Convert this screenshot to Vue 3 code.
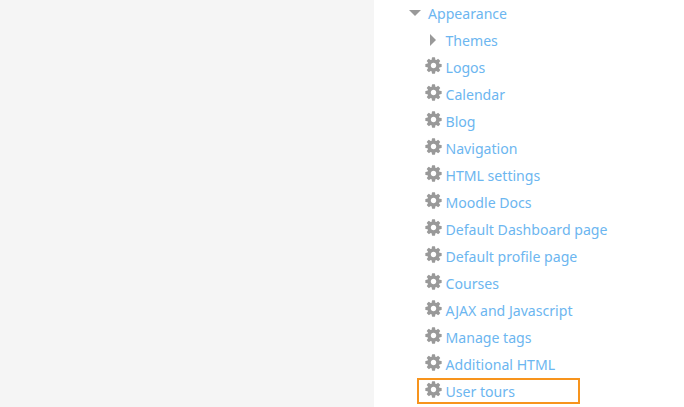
<script setup>
const items = ['Logos','Calendar','Blog','Navigation','HTML settings','Moodle Docs','Default Dashboard page','Default profile page','Courses','AJAX and Javascript','Manage tags','Additional HTML']
const gear = 'M1152 896q0-106-75-181t-181-75-181 75-75 181 75 181 181 75 181-75 75-181zm512-109v222q0 12-8 23t-20 13l-185 28q-19 54-39 91 35 50 107 138 10 12 10 25t-9 23q-27 37-99 108t-94 71q-12 0-26-9l-138-108q-44 23-91 38-16 136-29 186-7 28-36 28h-222q-14 0-24.500-8.500t-11.500-21.500l-28-184q-49-16-90-37l-141 107q-10 9-25 9-14 0-25-11-126-114-165-168-7-10-7-23 0-12 8-23 15-21 51-66.500t54-70.500q-27-50-41-99l-183-27q-13-2-21-12.500t-8-23.500v-222q0-12 8-23t19-13l186-28q14-46 39-92-40-57-107-138-10-12-10-24 0-10 9-23 26-36 98.500-107.500t94.500-71.500q13 0 26 10l138 107q44-23 91-38 16-136 29-186 7-28 36-28h222q14 0 24.500 8.500t11.500 21.500l28 184q49 16 90 37l142-107q9-9 24-9 13 0 25 10 129 119 165 170 7 8 7 22 0 12-8 23-15 21-51 66.500t-54 70.500q26 50 41 98l183 28q13 2 21 12.500t8 23.500z'
</script>

<template>
  <div class="page">
    <aside class="side"></aside>
    <main class="content">
      <ul class="tree">
        <li class="row top">
          <svg class="caret-down" width="12" height="6" viewBox="0 0 12 6"><path d="M0 0h12L6 6z" /></svg>
          <a>Appearance</a>
        </li>
        <li class="row sub">
          <svg class="caret-right" width="6" height="12" viewBox="0 0 6 12"><path d="M0 0l6 6-6 6z" /></svg>
          <a>Themes</a>
        </li>
        <li v-for="item in items" :key="item" class="row sub">
          <svg class="gear" width="19" height="19" viewBox="0 0 1792 1792"><path :d="gear" /></svg>
          <a>{{ item }}</a>
        </li>
        <li class="row sub highlighted">
          <svg class="gear" width="19" height="19" viewBox="0 0 1792 1792"><path :d="gear" /></svg>
          <a>User tours</a>
        </li>
      </ul>
    </main>
  </div>
</template>

<style scoped>
.page {
  display: flex;
  width: 684px;
  height: 407px;
  overflow: hidden;
  background: #fff;
  font-family: "Noto Sans", "Open Sans", sans-serif;
  font-size: 14.100px;
  color: #6cb6f0;
}
.side {
  width: 374px;
  background: #f5f5f5;
}
.content {
  flex: 1;
}
.tree {
  list-style: none;
  margin: 0;
  padding: 0 0 0 35px;
}
.row {
  display: flex;
  align-items: center;
  height: 27px;
}
.top {
  gap: 7px;
}
.sub {
  position: relative;
  padding-left: 36.500px;
}
.row svg path {
  fill: #999;
}
.caret-down {
  margin-top: -1px;
}
.sub svg {
  position: absolute;
}
.caret-right {
  left: 21px;
  top: 7px;
}
.gear {
  left: 14.500px;
  top: 2px;
}
.highlighted {
  width: 163px;
  height: 26px;
  box-sizing: border-box;
  margin-left: 8px;
  padding-left: 28.500px;
  outline: 2px solid #f7941d;
  outline-offset: -2px;
}
.highlighted .gear {
  left: 6.500px;
}
</style>
